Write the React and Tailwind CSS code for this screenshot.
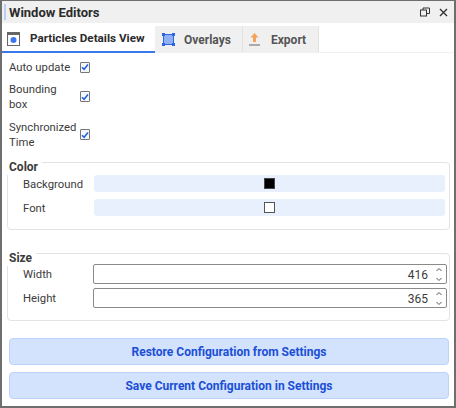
import React from "react";

const font = { fontFamily: 'Roboto, "Noto Sans", sans-serif' };

const Check = () => (
  <span className="w-[10px] h-[11px] border border-[#767676] rounded-[1px] bg-[#f4f7fd] flex items-center justify-center shrink-0">
    <svg width="8" height="8" viewBox="0 0 8 8" fill="none">
      <path d="M1 4.2 L3.1 6.3 L7 1.5" stroke="#1f5fe0" strokeWidth="1.5" />
    </svg>
  </span>
);

const Spinner = () => (
  <svg width="6" height="15" viewBox="0 0 6 15" fill="none" stroke="#555" strokeWidth="1">
    <path d="M0.5 4 L3 1.5 L5.5 4" />
    <path d="M0.5 11 L3 13.5 L5.5 11" />
  </svg>
);

const NumberRow = ({ label, value }) => (
  <div className="flex items-center h-5">
    <span className="w-[85px] pl-[15px] pt-[3px] text-[11.3px] text-[#3c3c3c]">{label}</span>
    <div className="flex-1 h-5 flex items-center justify-end border border-[#8a8a8a] rounded-[2px] bg-white pr-[4px]">
      <span className="text-[12px] pt-[1px] text-[#3c3c3c] mr-[8px]">{value}</span>
      <Spinner />
    </div>
  </div>
);

const ColorRow = ({ label, swatch }) => (
  <div className="flex items-center h-[17px]">
    <span className="w-[86px] pl-[15px] pt-[3px] text-[11.3px] text-[#3c3c3c]">{label}</span>
    <div className="flex-1 h-[17px] rounded-[3px] bg-[#e8effd] flex items-center justify-center">
      {swatch}
    </div>
  </div>
);

const Group = ({ title, className, children }) => (
  <div className={`relative ml-[5px] mr-[4px] border border-[#e3e3e3] rounded-[4px] ${className}`}>
    <span className="absolute left-[-1px] top-[-4px] h-[16px] bg-white pl-[2px] pr-[4px] text-[12px] leading-[16px] font-bold text-[#3c3c3c]">
      {title}
    </span>
    {children}
  </div>
);

const App = () => {
  return (
    <div style={font} className="w-[456px] h-[408px] bg-white border-2 border-[#6e6e6e] border-t-[1px] flex flex-col overflow-hidden">
      <div className="h-[22px] bg-[#f0f0f0] flex items-center shrink-0 pl-[2px] pr-[6px]">
        <span className="w-[2px] h-[16px] bg-[#b9cff5]" />
        <span className="ml-[3px] pt-[2px] text-[13px] font-bold text-[#2b2b2b] flex-1">Window Editors</span>
        <svg width="10" height="10" viewBox="0 0 10 10" fill="none" stroke="#333" strokeWidth="1" className="mr-[9px]">
          <rect x="0.5" y="3" width="6" height="6" />
          <path d="M3 3 V1 H9.5 V6.5 H6.5" />
        </svg>
        <svg width="9" height="9" viewBox="0 0 9 9" fill="none" stroke="#333" strokeWidth="1.4">
          <path d="M1 1 L8 8 M8 1 L1 8" />
        </svg>
      </div>

      <div className="h-[30px] flex items-start shrink-0 border-b border-[#eef0f4] pt-[3px]">
        <div className="w-[153px] h-[27px] border-b-2 border-[#3b78e7] flex items-center pl-[5px] bg-white">
          <svg width="13" height="14" viewBox="0 0 13 14" className="shrink-0">
            <rect x="0.5" y="0.5" width="12" height="13" fill="#fff" stroke="#666" />
            <rect x="0.5" y="0.5" width="12" height="2.5" fill="#666" />
            <circle cx="6.5" cy="8" r="3" fill="#3b78f0" />
          </svg>
          <span className="ml-[10px] pt-[1px] text-[11.7px] font-bold text-[#2b2b2b] whitespace-nowrap">Particles Details View</span>
        </div>
        <div className="w-[88px] h-[26px] bg-[#f0f0f0] flex items-center pl-[7px] border-r border-[#e2e2e2]">
          <svg width="13" height="13" viewBox="0 0 13 13" className="shrink-0">
            <rect x="1.5" y="1.5" width="10" height="10" fill="#8fb0f5" stroke="#2f66df" />
            <rect x="0" y="0" width="3" height="3" fill="#2f66df" />
            <rect x="10" y="0" width="3" height="3" fill="#2f66df" />
            <rect x="0" y="10" width="3" height="3" fill="#2f66df" />
            <rect x="10" y="10" width="3" height="3" fill="#2f66df" />
          </svg>
          <span className="ml-[9px] pt-[1px] text-[12px] font-bold text-[#555]">Overlays</span>
        </div>
        <div className="w-[76px] h-[26px] bg-[#f0f0f0] flex items-center pl-[6px] border-r border-[#e2e2e2]">
          <svg width="11" height="13" viewBox="0 0 11 13" className="shrink-0">
            <path d="M5.5 0 L9.5 4.5 H7 V9 H4 V4.5 H1.5 Z" fill="#f5a25d" />
            <rect x="0" y="11.5" width="11" height="1" fill="#666" />
          </svg>
          <span className="ml-[11px] pt-[1px] text-[12px] font-bold text-[#555]">Export</span>
        </div>
      </div>

      <div className="flex flex-col pl-[7px] pt-[6px] gap-[6px] text-[11.3px] leading-[15px] text-[#3c3c3c]">
        <div className="flex items-center">
          <span className="w-[71px] pt-[1px]">Auto update</span>
          <Check />
        </div>
        <div className="flex items-center">
          <span className="w-[71px] pt-[1px]">Bounding<br />box</span>
          <Check />
        </div>
        <div className="flex items-center mt-[1px]">
          <span className="w-[71px] pt-[1px]">Synchronized<br />Time</span>
          <Check />
        </div>
      </div>

      <Group title="Color" className="mt-[12px] h-[68px] flex flex-col gap-[7px] pt-[12px] pr-[4px]">
        <ColorRow label="Background" swatch={<span className="w-[11px] h-[11px] bg-black border border-[#444]" />} />
        <ColorRow label="Font" swatch={<span className="w-[11px] h-[11px] bg-white border border-[#555]" />} />
      </Group>

      <Group title="Size" className="mt-[23px] h-[68px] flex flex-col gap-[4px] pt-[10px] pr-[2px]">
        <NumberRow label="Width" value="416" />
        <NumberRow label="Height" value="365" />
      </Group>

      <div className="flex flex-col gap-[7px] ml-[7px] mr-[5px] mt-[17px]">
        <button className="h-[27px] pt-[1px] rounded-[4px] border border-[#bcd2fb] bg-[#d3e2fd] text-[12px] font-bold text-[#1a4fd6]">
          Restore Configuration from Settings
        </button>
        <button className="h-[27px] pt-[1px] rounded-[4px] border border-[#bcd2fb] bg-[#d3e2fd] text-[12px] font-bold text-[#1a4fd6]">
          Save Current Configuration in Settings
        </button>
      </div>
    </div>
  );
};

export default App;
